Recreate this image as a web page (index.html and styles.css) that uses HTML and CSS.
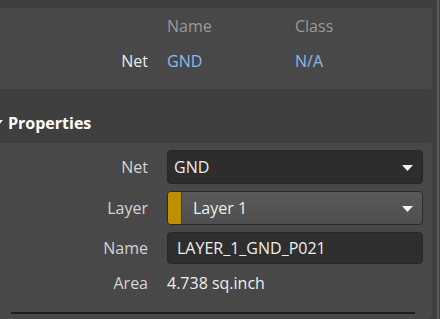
FILE: index.html
```html
<!DOCTYPE html>
<html>
<head>
<meta charset="utf-8">
<link rel="stylesheet" href="styles.css">
</head>
<body>
<div class="frame">
  <div class="main">
    <section class="card summary">
      <div class="grid">
        <span></span><span class="head">Name</span><span class="head">Class</span>
        <span class="lbl-strong">Net</span><span class="link">GND</span><span class="link">N/A</span>
      </div>
    </section>
    <div class="section-title">
      <svg class="caret" width="8" height="6" viewBox="0 0 8 6"><path d="M0 0H8L4 5Z" fill="#f0f0f0"/></svg>
      <span>Properties</span>
    </div>
    <section class="card props">
      <div class="form">
        <span class="lbl">Net</span>
        <div class="select dark"><span>GND</span><svg class="arrow" width="11" height="6" viewBox="0 0 11 6"><path d="M0 0H11L5.5 6Z" fill="#f2f2f2"/></svg></div>
        <span class="lbl">Layer</span>
        <div class="select layer"><span class="swatch"></span><span class="ltext">Layer 1</span><svg class="arrow" width="11" height="6" viewBox="0 0 11 6"><path d="M0 0H11L5.5 6Z" fill="#f2f2f2"/></svg></div>
        <span class="lbl">Name</span>
        <div class="input"><span>LAYER_1_GND_P021</span></div>
        <span class="lbl area-l">Area</span>
        <span class="val area-v">4.738 sq.inch</span>
      </div>
      <div class="rule"></div>
    </section>
  </div>
  <div class="scroll"></div>
</div>
</body>
</html>
```
FILE: styles.css
```css
html, body {
  margin: 0;
  padding: 0;
  background: #3f3f3f;
  overflow: hidden;
}
body {
  width: 440px;
  height: 319px;
  font-family: "Open Sans", "Noto Sans", sans-serif;
  font-size: 16px;
  color: #eeeeee;
}
.frame {
  display: flex;
  height: 319px;
}
.main {
  width: 437px;
  display: flex;
  flex-direction: column;
}
.scroll {
  width: 2px;
  background: #5a5a5a;
}
.card {
  background: #484848;
  margin-right: 5px;
  margin-left: -6px;
  padding-left: 6px;
  border-radius: 4px;
}
.summary {
  margin-top: 8px;
  height: 81px;
  box-sizing: border-box;
  padding-top: 8px;
}
.grid {
  display: grid;
  grid-template-columns: 148px 109px 1fr;
  column-gap: 19px;
  row-gap: 15px;
  line-height: 20px;
}
.head { color: #9a9a9a; }
.lbl-strong { color: #eaeaea; text-align: right; }
.link { color: #8cb8f0; }
.section-title {
  box-sizing: border-box;
  padding-top: 24px;
  display: flex;
  align-items: center;
  height: 54px;
  line-height: 20px;
  font-weight: 700;
  color: #ffffff;
  position: relative;
}
.section-title span { display: block; margin-left: 8px; margin-top: -10px; }
.caret {
  position: absolute;
  left: -5px;
  top: 31px;
}
.props {
  flex: 1;
  padding-top: 7px;
}
.form {
  display: grid;
  grid-template-columns: 148px 256px;
  column-gap: 19px;
  row-gap: 7px;
  align-items: center;
}
.lbl { color: #d4d4d4; text-align: right; }
.select, .input {
  box-sizing: border-box;
  height: 34px;
  border-radius: 4px;
  display: flex;
  align-items: center;
  position: relative;
}
.dark {
  background: #2d2d2d;
  border: 1px solid #262626;
  padding-left: 6px;
}
.arrow {
  position: absolute;
  right: 9px;
  top: 14px;
}
.layer {
  background: linear-gradient(#5a5a5a, #4e4e4e);
  border: 1px solid #2a2a2a;
  overflow: hidden;
}
.swatch {
  width: 13px;
  align-self: stretch;
  background: #bf8f00;
  border-right: 1px solid #3a3a3a;
}
.ltext { margin-left: 11px; }
.input {
  height: 32px;
  background: #2e2e2e;
  border: 1px solid #282828;
  padding-left: 9px;
}
.area-l, .area-v { height: 24px; line-height: 24px; }
.val { color: #eeeeee; }
.rule {
  margin: 17px 17px 0 11px;
  height: 2px;
  background: #1f1f1f;
}
```
